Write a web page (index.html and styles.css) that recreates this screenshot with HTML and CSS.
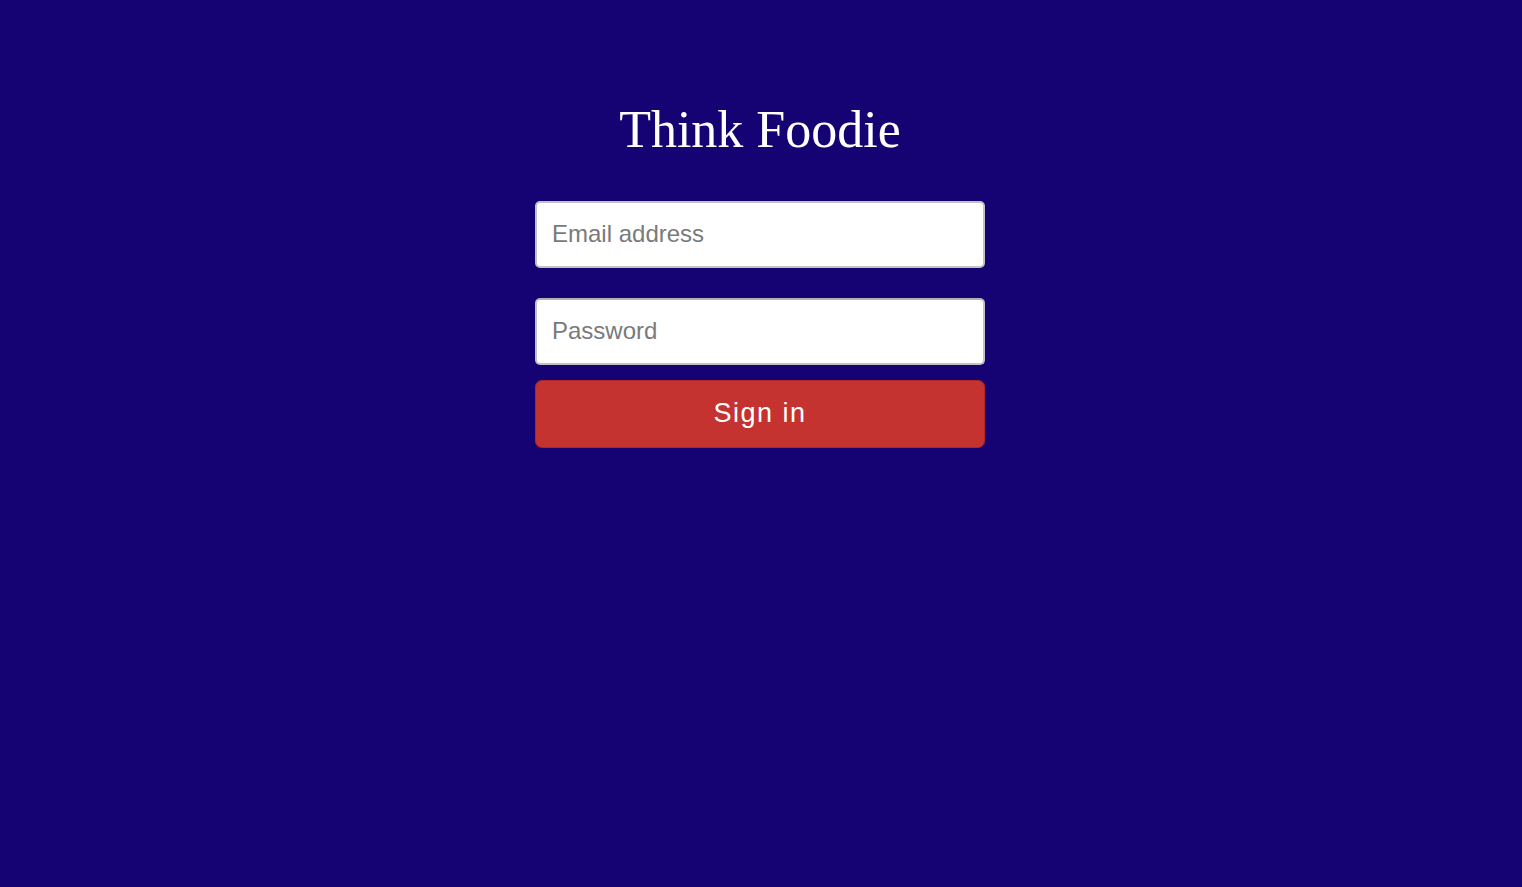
FILE: index.html
```html
<!DOCTYPE html>
<html lang="en">
<head>
<meta charset="utf-8">
<title>Think Foodie</title>
<link rel="stylesheet" href="styles.css">
</head>
<body>
<main class="page">
  <form class="signin">
    <h1 class="title">Think Foodie</h1>
    <input class="field field-email" type="email" placeholder="Email address">
    <input class="field field-password" type="password" placeholder="Password">
    <button class="btn" type="button">Sign in</button>
  </form>
</main>
</body>
</html>
```
FILE: styles.css
```css
html, body {
  margin: 0;
  padding: 0;
  height: 100%;
  background: #150374;
}
.page {
  display: flex;
  justify-content: center;
  padding-top: 98px;
}
.signin {
  width: 450px;
  display: flex;
  flex-direction: column;
  margin-right: 2px;
}
.title {
  margin: 0 0 39px;
  font-family: "Liberation Serif", "Times New Roman", serif;
  font-weight: normal;
  font-size: 52px;
  line-height: 64px;
  color: #ffffff;
  text-align: center;
}
.field {
  box-sizing: border-box;
  height: 67px;
  width: 100%;
  padding: 0 15px 2px;
  border: 2px solid #c2c2c2;
  border-radius: 5px;
  background: #fff;
  font-family: "Liberation Sans", Arial, sans-serif;
  font-size: 24px;
  color: #333;
  outline: none;
}
.field::placeholder {
  color: #7a7a7a;
}
.field-email {
  margin-bottom: 30px;
}
.field-password {
  margin-bottom: 15px;
  border-top-color: #b0b0b0;
}
.btn {
  box-sizing: border-box;
  height: 68px;
  width: 100%;
  padding: 0 0 2px;
  border: 1.5px solid #b2242a;
  border-radius: 7px;
  background: #c53330;
  color: #fff;
  font-family: "Liberation Sans", Arial, sans-serif;
  font-size: 27px;
  letter-spacing: 1.5px;
  cursor: pointer;
}
```
